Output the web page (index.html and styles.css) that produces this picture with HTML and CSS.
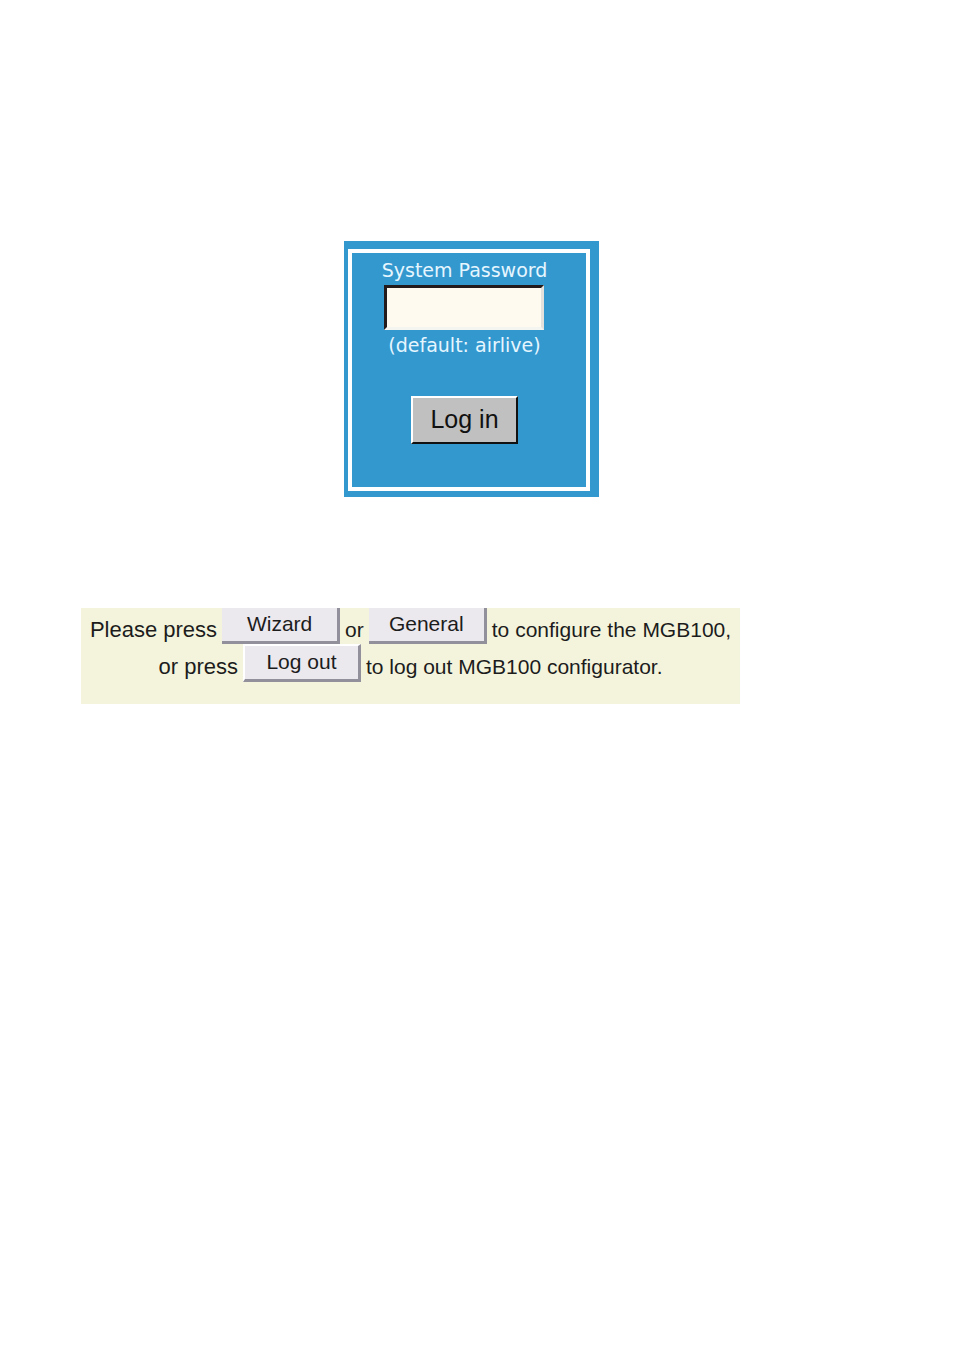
FILE: index.html
```html
<!DOCTYPE html>
<html lang="en">
<head>
<meta charset="utf-8">
<meta name="viewport" content="width=device-width, initial-scale=1">
<title>MGB100 configurator</title>
<link rel="stylesheet" href="styles.css">
</head>
<body>
<main class="page">
  <section class="login">
    <form class="login-frame">
      <label class="login-text" for="password">System Password</label>
      <input class="login-input" id="password" type="password" aria-describedby="hint">
      <span class="login-text" id="hint">(default: airlive)</span>
      <button class="login-button" type="button">Log in</button>
    </form>
  </section>
  <section class="panel">
    <div class="row">
      <span class="lead">Please press</span>
      <button class="action" type="button">Wizard</button>
      <span>or</span>
      <button class="action" type="button">General</button>
      <span>to configure the MGB100,</span>
    </div>
    <div class="row">
      <span class="lead">or press</span>
      <button class="action action-raised" type="button">Log out</button>
      <span>to log out MGB100 configurator.</span>
    </div>
  </section>
</main>
</body>
</html>
```
FILE: styles.css
```css
* {
  box-sizing: border-box;
}

body {
  margin: 0;
  background: #fff;
  color: #1c1c1c;
  font-family: "Liberation Sans", Arial, sans-serif;
}

.page {
  max-width: 820px;
  padding: 241px 80px 80px 81px;
  display: flex;
  flex-direction: column;
  gap: 111px;
}

.login {
  align-self: center;
  margin-left: 122px;
  padding: 8px 9px 6px 4px;
  background: #3398ce;
}

.login-frame {
  display: flex;
  flex-direction: column;
  align-items: center;
  padding: 5px 39px 43px 30px;
  border: 4px solid #fff;
}

.login-text {
  color: #e6f6ff;
  font-family: "DejaVu Sans", Verdana, sans-serif;
  font-size: 19px;
  line-height: 24px;
  white-space: nowrap;
}

.login-input {
  width: 160px;
  height: 45px;
  margin: 3px 0 3px;
  padding: 4px 8px;
  border: 3px solid;
  border-color: #231a1c #e4e0dc #f4f4f0 #231a1c;
  background: #fffaef;
  font-size: 20px;
}

.login-button {
  margin-top: 39px;
  padding: 5px 17px 7px;
  border: 2px solid;
  border-color: #fff #111 #111 #fff;
  background: #c0c0c0;
  color: #111;
  font-family: inherit;
  font-size: 25px;
  line-height: 32px;
}

.panel {
  padding-bottom: 22px;
  background: #f4f4dc;
  font-size: 21px;
}

.row {
  display: flex;
  justify-content: center;
  align-items: center;
  gap: 5px;
  line-height: 24px;
  white-space: nowrap;
}

.row span {
  padding-top: 8px;
}

.row .lead {
  font-size: 22px;
}

.action {
  width: 118px;
  height: 36px;
  padding: 0 0 1px;
  border: solid #92919b;
  border-width: 0 3px 3px 0;
  background: #ebe8ee;
  color: #1c1c1c;
  font-family: inherit;
  font-size: 21px;
  line-height: 24px;
}

.action-raised {
  height: 38px;
  border-width: 2px 3px 3px 2px;
  border-color: #fff #92919b #92919b #fff;
}
```
